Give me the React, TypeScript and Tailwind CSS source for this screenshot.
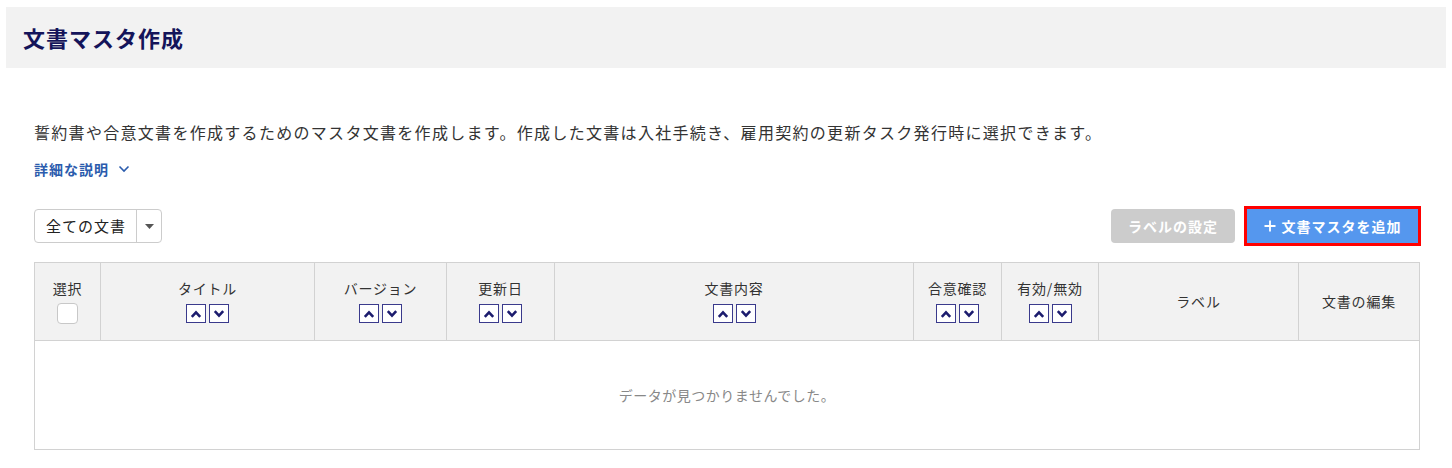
import React from "react";

const columns = [
  { label: "選択", width: "w-[66px]", kind: "check" },
  { label: "タイトル", width: "w-[214px]", kind: "sort" },
  { label: "バージョン", width: "w-[132px]", kind: "sort" },
  { label: "更新日", width: "w-[108px]", kind: "sort" },
  { label: "文書内容", width: "w-[359px]", kind: "sort" },
  { label: "合意確認", width: "w-[88px]", kind: "sort" },
  { label: "有効/無効", width: "w-[97px]", kind: "sort" },
  { label: "ラベル", width: "w-[200px]", kind: "plain" },
  { label: "文書の編集", width: "w-[121px]", kind: "plain" },
];

const SortButtons = () => (
  <div className="flex justify-center gap-[3px] mt-[6px]">
    <span className="w-[20px] h-[19px] border border-[#3a3a8c] bg-white flex items-center justify-center">
      <svg width="12" height="8" viewBox="0 0 12 8">
        <path d="M1.8 6.8 L6 2.4 L10.2 6.8" fill="none" stroke="#1c1c6e" strokeWidth="2.6" />
      </svg>
    </span>
    <span className="w-[20px] h-[19px] border border-[#3a3a8c] bg-white flex items-center justify-center">
      <svg width="12" height="8" viewBox="0 0 12 8">
        <path d="M1.8 1.2 L6 5.6 L10.2 1.2" fill="none" stroke="#1c1c6e" strokeWidth="2.6" />
      </svg>
    </span>
  </div>
);

const App = () => {
  return (
    <div
      className="bg-white min-h-[468px] pt-[7px] text-[#333]"
      style={{ fontFamily: '"Noto Sans CJK JP", "Noto Sans", sans-serif' }}
    >
      {/* Page header */}
      <div className="mx-[6px] h-[61px] bg-[#f2f2f2] flex items-center px-[17px]">
        <h1 className="text-[22px] font-bold text-[#14145a] tracking-[1px]">文書マスタ作成</h1>
      </div>

      <div className="px-[34px]">
        <p className="mt-[52px] text-[16px] leading-[24px] tracking-[1.3px] text-[#333]">
          誓約書や合意文書を作成するためのマスタ文書を作成します。作成した文書は入社手続き、雇用契約の更新タスク発行時に選択できます。
        </p>

        <div className="mt-[15px] flex items-center gap-[9px] text-[14px] leading-[20px] font-bold text-[#2b5cad] tracking-[1px]">
          <span>詳細な説明</span>
          <svg width="12" height="8" viewBox="0 0 12 8">
            <path d="M1.5 1.5 L6 6 L10.5 1.5" fill="none" stroke="#2b5cad" strokeWidth="1.6" />
          </svg>
        </div>

        {/* Toolbar */}
        <div className="mt-[30px] flex items-center justify-between">
          <div className="flex h-[34px] w-[128px] border border-[#cccccc] rounded-[4px] bg-white">
            <div className="w-[102px] flex items-center pl-[11px] text-[15px] tracking-[1px] text-[#222] border-r border-[#cccccc]">
              全ての文書
            </div>
            <div className="flex-1 flex items-center justify-center">
              <svg width="9" height="5" viewBox="0 0 9 5">
                <path d="M0 0 L9 0 L4.5 5 Z" fill="#555" />
              </svg>
            </div>
          </div>

          <div className="flex items-center gap-[12px]">
            <button className="h-[34px] w-[124px] rounded-[4px] bg-[#cccccc] text-white text-[14px] font-bold tracking-[1px]">
              ラベルの設定
            </button>
            <button className="h-[34px] w-[171px] bg-[#5597ee] text-white text-[14px] font-bold tracking-[1px] outline-[3px] outline-solid outline-[#ff0000] flex items-center justify-center gap-[6px]">
              <svg width="12" height="12" viewBox="0 0 12 12">
                <path d="M6 0.5 V11.5 M0.5 6 H11.5" stroke="white" strokeWidth="1.8" />
              </svg>
              文書マスタを追加
            </button>
          </div>
        </div>

        {/* Table */}
        <table className="mt-[19px] w-[1385px] table-fixed border-collapse">
          <thead>
            <tr className="bg-[#f2f2f2]">
              {columns.map((c) => (
                <th
                  key={c.label}
                  className={`${c.width} h-[78px] border border-[#d2d2d2] font-normal text-[14px] tracking-[0.8px] text-[#333] align-middle`}
                >
                  {c.kind === "plain" ? (
                    <span>{c.label}</span>
                  ) : (
                    <div className="flex flex-col items-center mt-[-2px]">
                      <span className="leading-[20px]">{c.label}</span>
                      {c.kind === "sort" ? (
                        <SortButtons />
                      ) : (
                        <span className="mt-[5px] w-[21px] h-[21px] rounded-[4px] border border-[#c8c8c8] bg-white" />
                      )}
                    </div>
                  )}
                </th>
              ))}
            </tr>
          </thead>
          <tbody>
            <tr>
              <td
                colSpan={9}
                className="h-[109px] border border-[#d2d2d2] text-center text-[14px] tracking-[0.5px] text-[#888]"
              >
                データが見つかりませんでした。
              </td>
            </tr>
          </tbody>
        </table>
      </div>
    </div>
  );
};

export default App;
